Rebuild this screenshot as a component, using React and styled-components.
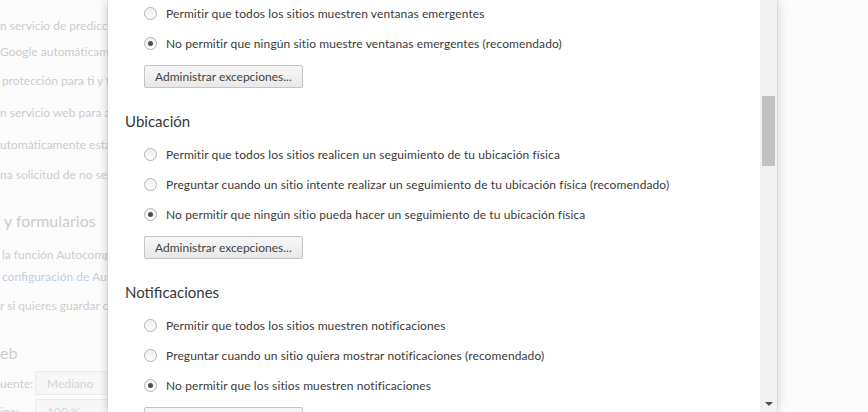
import React from "react";
import styled, { createGlobalStyle } from "styled-components";

const GlobalStyle = createGlobalStyle`
  html, body {
    margin: 0;
    padding: 0;
  }
  body {
    width: 868px;
    height: 412px;
    overflow: hidden;
    background: #fbfbfb;
    font-family: Lato, "Segoe UI", "Liberation Sans", sans-serif;
  }
`;

const backgroundLines = [
  { mt: 18, text: "n servicio de predicción para completar búsquedas" },
  { mt: 10, text: "Google automáticamente algunos datos del sistema" },
  { mt: 13, text: "protección para ti y tu dispositivo", indent: 2 },
  { mt: 16, text: "n servicio web para ayudar a resolver errores" },
  { mt: 16, text: "utomáticamente estadísticas de uso" },
  { mt: 14, text: "na solicitud de no seguimiento con tu tráfico" },
  { mt: 27, text: "y formularios", heading: true, indent: 4 },
  { mt: 15, text: "la función Autocompletar para rellenar formularios", indent: 2 },
  { mt: 6, text: "configuración de Autocompletar", link: true, indent: 2 },
  { mt: 13, text: "r si quieres guardar contraseñas web" },
  { mt: 28, text: "eb", heading: true },
];

const sections = [
  {
    options: [
      { label: "Permitir que todos los sitios muestren ventanas emergentes" },
      {
        label:
          "No permitir que ningún sitio muestre ventanas emergentes (recomendado)",
        checked: true,
      },
    ],
  },
  {
    title: "Ubicación",
    options: [
      {
        label:
          "Permitir que todos los sitios realicen un seguimiento de tu ubicación física",
      },
      {
        label:
          "Preguntar cuando un sitio intente realizar un seguimiento de tu ubicación física (recomendado)",
      },
      {
        label:
          "No permitir que ningún sitio pueda hacer un seguimiento de tu ubicación física",
        checked: true,
      },
    ],
  },
  {
    title: "Notificaciones",
    options: [
      { label: "Permitir que todos los sitios muestren notificaciones" },
      {
        label:
          "Preguntar cuando un sitio quiera mostrar notificaciones (recomendado)",
      },
      {
        label: "No permitir que los sitios muestren notificaciones",
        checked: true,
      },
    ],
  },
];

export default function App() {
  return (
    <Page>
      <GlobalStyle />
      <Backdrop>
        {backgroundLines.map((line) => (
          <BackLine
            key={line.text}
            $mt={line.mt}
            $heading={line.heading}
            $link={line.link}
            $indent={line.indent || 0}
          >
            {line.text}
          </BackLine>
        ))}
        <FieldRow $mt={7}>
          <FieldLabel>uente:</FieldLabel>
          <FakeSelect>Mediano</FakeSelect>
        </FieldRow>
        <FieldRow $mt={4}>
          <FieldLabel>ina:</FieldLabel>
          <FakeSelect>100 %</FakeSelect>
        </FieldRow>
      </Backdrop>

      <Dialog>
        <Body>
          <Scrolled>
            {sections.map((section, i) => (
              <Section key={i} $first={i === 0}>
                {section.title && <Heading>{section.title}</Heading>}
                <Options>
                  {section.options.map((opt) => (
                    <Option key={opt.label}>
                      <Radio $checked={opt.checked} />
                      {opt.label}
                    </Option>
                  ))}
                </Options>
                <Button>Administrar excepciones...</Button>
              </Section>
            ))}
          </Scrolled>
        </Body>
        <Scrollbar>
          <Thumb $top={96} $size={70} />
          <ArrowDown />
        </Scrollbar>
      </Dialog>
    </Page>
  );
}

const Page = styled.div`
  position: relative;
  width: 868px;
  height: 412px;
  overflow: hidden;
  background: #fcfcfc;
`;

const Backdrop = styled.div`
  display: flex;
  flex-direction: column;
  width: 220px;
  overflow: hidden;
  color: #cbcbcb;
`;

const BackLine = styled.div`
  margin-top: ${(p) => p.$mt}px;
  padding-left: ${(p) => p.$indent}px;
  white-space: nowrap;
  font-size: ${(p) => (p.$heading ? "16px" : "12px")};
  line-height: ${(p) => (p.$heading ? "22px" : "16px")};
  color: ${(p) => (p.$link ? "#c3cde0" : "#cccccc")};
`;

const FieldRow = styled.div`
  margin-top: ${(p) => p.$mt}px;
  display: flex;
  align-items: center;
  gap: 6px;
  height: 24px;
  font-size: 12px;
  white-space: nowrap;
  color: #cccccc;
`;

const FieldLabel = styled.span`
  width: 29px;
`;

const FakeSelect = styled.div`
  box-sizing: border-box;
  width: 110px;
  height: 24px;
  padding: 0 11px;
  display: flex;
  align-items: center;
  border: 1px solid #ececec;
  background: #f7f7f7;
  color: #d4d4d4;
`;

const Dialog = styled.div`
  position: absolute;
  top: 0;
  left: 108px;
  width: 669px;
  height: 412px;
  display: flex;
  background: #fff;
  box-shadow: 0 0 0 1px rgba(0, 0, 0, 0.05), 0 0 10px rgba(0, 0, 0, 0.22);
`;

const Body = styled.div`
  flex: 1;
  overflow: hidden;
  padding-left: 17px;
`;

const Scrolled = styled.div`
  margin-top: -2px;
  display: flex;
  flex-direction: column;
`;

const Section = styled.section`
  display: flex;
  flex-direction: column;
  align-items: flex-start;
  margin-top: ${(p) => (p.$first ? 0 : 23)}px;
`;

const Heading = styled.h3`
  margin: 0 0 8px;
  font-size: 15px;
  font-weight: 400;
  line-height: 20px;
  color: #383838;
`;

const Options = styled.div`
  display: flex;
  flex-direction: column;
  padding-left: 19px;
`;

const Option = styled.label`
  height: 30px;
  display: flex;
  align-items: center;
  gap: 9px;
  font-size: 12px;
  letter-spacing: 0.1px;
  color: #3a3a3a;
  white-space: nowrap;
`;

const Radio = styled.span`
  box-sizing: border-box;
  width: 13px;
  height: 13px;
  flex: none;
  border-radius: 50%;
  border: 1px solid #b3b3b3;
  background: linear-gradient(#ececec, #fdfdfd);
  box-shadow: inset 0 1px 1px rgba(255, 255, 255, 0.8);
  display: flex;
  align-items: center;
  justify-content: center;
  &::after {
    content: "";
    display: ${(p) => (p.$checked ? "block" : "none")};
    width: 5px;
    height: 5px;
    border-radius: 50%;
    background: #4f4f4f;
  }
`;

const Button = styled.button`
  margin: 7px 0 0 19px;
  height: 23px;
  padding: 0 10px;
  border: 1px solid #c4c4c4;
  border-radius: 2px;
  background: linear-gradient(#f7f7f7, #e8e8e8);
  font-family: Lato, "Segoe UI", "Liberation Sans", sans-serif;
  font-size: 12px;
  color: #444;
`;

const Scrollbar = styled.div`
  width: 17px;
  display: flex;
  flex-direction: column;
  align-items: center;
  background: #f1f1f1;
`;

const Thumb = styled.div`
  width: 13px;
  margin-top: ${(p) => p.$top}px;
  height: ${(p) => p.$size}px;
  background: #c1c1c1;
`;

const ArrowDown = styled.div`
  margin-top: auto;
  margin-bottom: 6px;
  width: 0;
  height: 0;
  border-left: 4px solid transparent;
  border-right: 4px solid transparent;
  border-top: 4px solid #505050;
`;
